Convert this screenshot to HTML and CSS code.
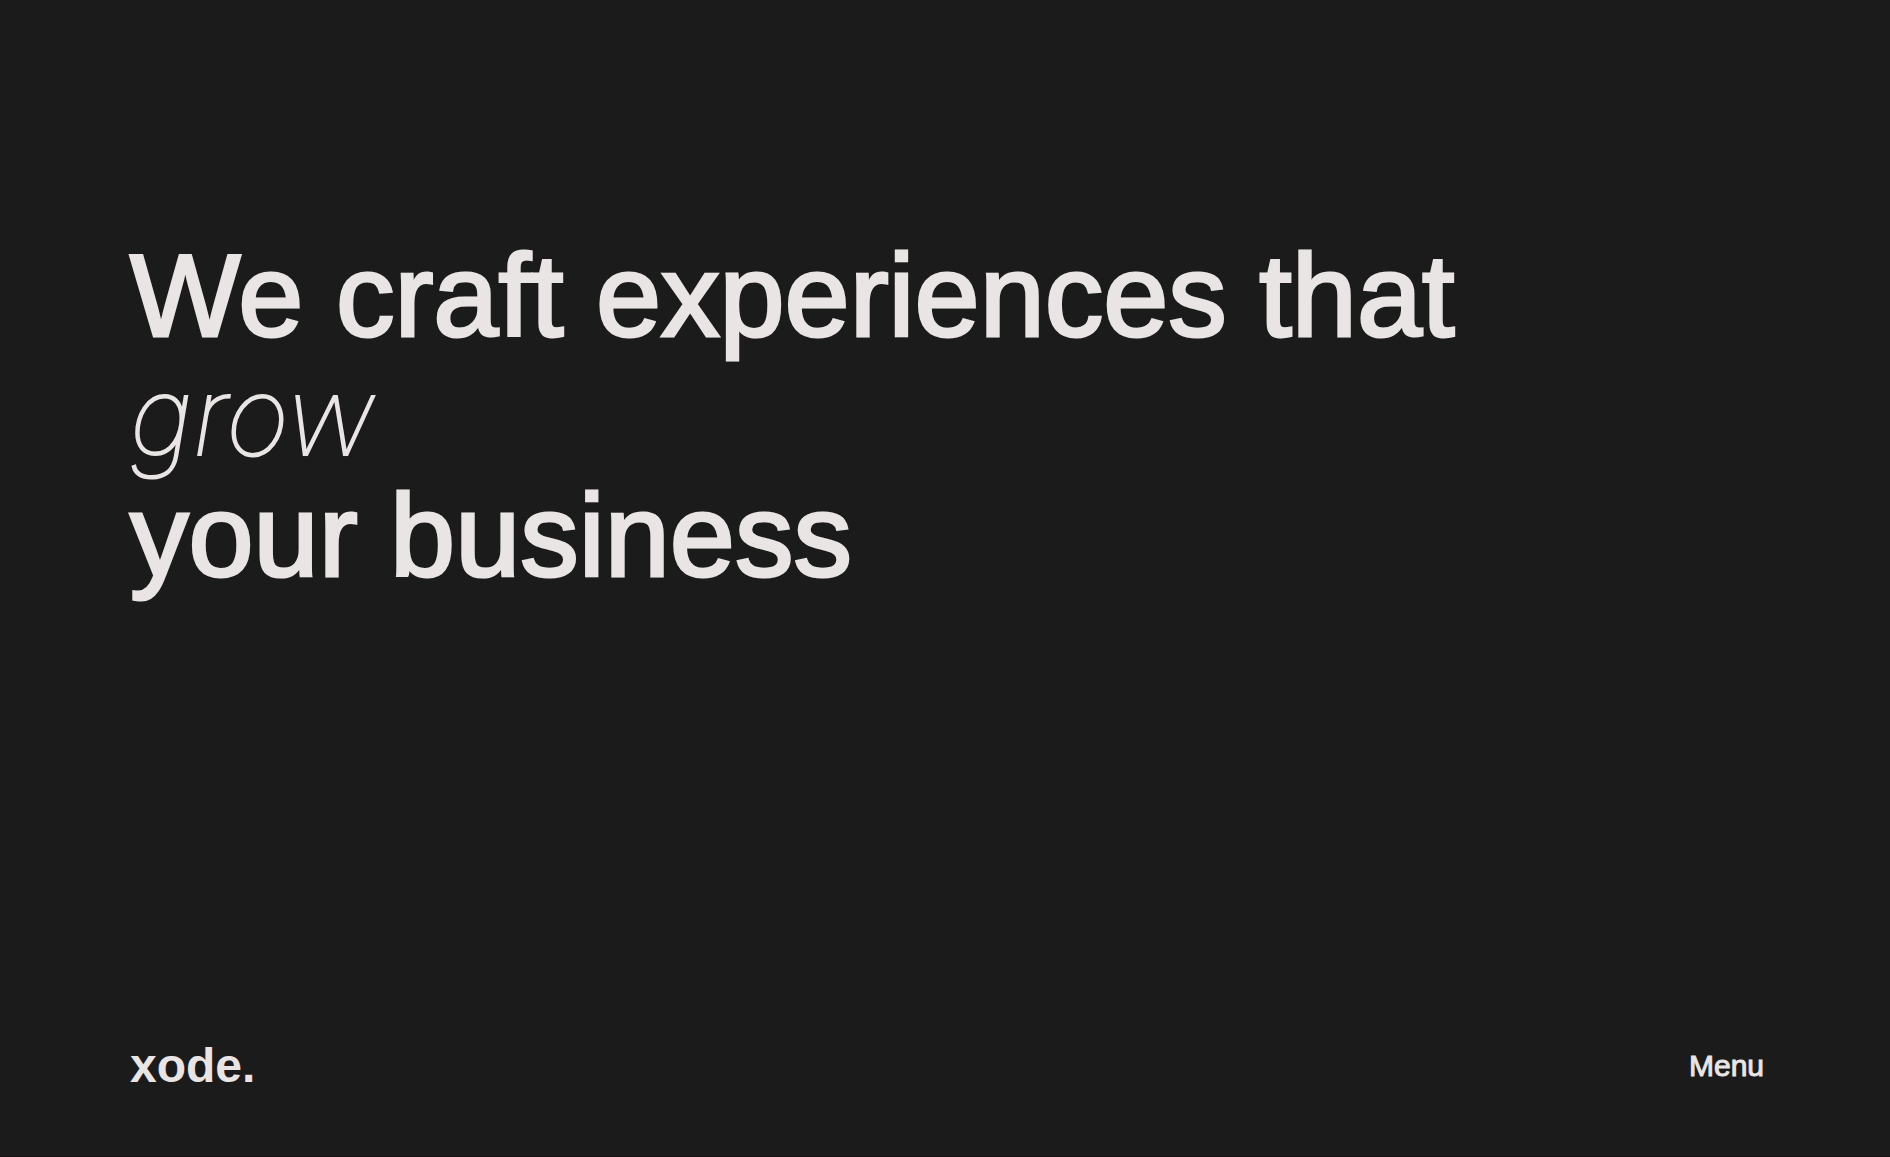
FILE: index.html
```html
<!DOCTYPE html>
<html lang="en">
<head>
<meta charset="utf-8">
<meta name="viewport" content="width=device-width, initial-scale=1">
<title>xode.</title>
<link rel="stylesheet" href="styles.css">
</head>
<body>
<main class="hero">
<h1 class="headline">We craft experiences that <em class="accent">grow</em> your business</h1>
</main>
<footer class="bar">
<a class="logo" href="#">xode.</a>
<button class="menu" type="button">Menu</button>
</footer>
</body>
</html>
```
FILE: styles.css
```css
* {
  box-sizing: border-box;
}

body {
  margin: 0;
  min-height: 100vh;
  display: flex;
  flex-direction: column;
  justify-content: space-between;
  padding: 236px 126px 60px 130px;
  background: #1b1b1b;
  border-bottom: 1px solid #181114;
  color: #e9e5e4;
  font-family: "Liberation Sans", Arial, sans-serif;
}

.headline {
  margin: 0;
  font-size: 117px;
  line-height: 120px;
  font-weight: 400;
  -webkit-text-stroke: 3px currentColor;
}

.accent {
  display: block;
  font-family: Inter, sans-serif;
  font-size: 108px;
  font-weight: 100;
  -webkit-text-stroke: 2px currentColor;
}

.bar {
  display: flex;
  align-items: center;
  justify-content: space-between;
}

.logo {
  color: inherit;
  font-size: 48px;
  line-height: 60px;
  font-weight: 700;
  text-decoration: none;
}

.menu {
  padding: 0;
  border: 0;
  background: none;
  color: inherit;
  font-family: inherit;
  font-size: 30px;
  line-height: 60px;
  -webkit-text-stroke: 1px currentColor;
  cursor: pointer;
}
```
